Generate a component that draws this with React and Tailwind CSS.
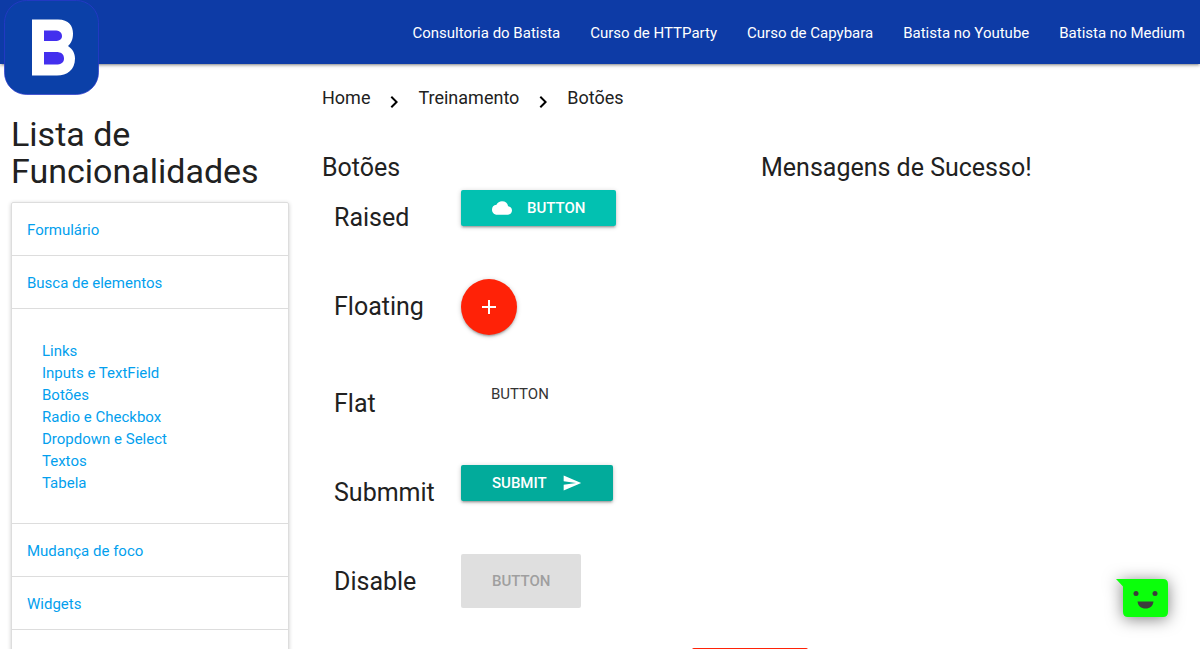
import React from "react";
import { MdAdd, MdChevronRight, MdCloud, MdSend } from "react-icons/md";

const navLinks = [
  "Consultoria do Batista",
  "Curso de HTTParty",
  "Curso de Capybara",
  "Batista no Youtube",
  "Batista no Medium",
];

const searchLinks = [
  "Links",
  "Inputs e TextField",
  "Botões",
  "Radio e Checkbox",
  "Dropdown e Select",
  "Textos",
  "Tabela",
];

const crumbs = ["Home", "Treinamento", "Botões"];

const raised =
  "flex h-9 items-center gap-[15px] rounded-xs px-[31px] text-[15px] font-medium text-white shadow-[0_2px_2px_0_rgba(0,0,0,0.14),0_3px_1px_-2px_rgba(0,0,0,0.12),0_1px_5px_0_rgba(0,0,0,0.2)]";

function Logo() {
  return (
    <svg viewBox="0 0 95 95" className="size-[95px]" role="img" aria-label="Batista">
      <rect x="0.5" y="0.5" width="94" height="94" rx="22" fill="#0b40a8" stroke="#2c38cf" strokeWidth="0.7" />
      <path
        fill="#fff"
        d="M28 19.5H54C65 19.5 69 26 69 33.5C69 39.5 67 43.5 64 46C68.500 49 71 53 71 58.500C71 70 63 75.500 53 75.500H28Z"
      />
      <path
        fill="#432fee"
        d="M40 30.500H50.500C55.500 30.500 58 32.500 58 36C58 39.500 55.500 41 51 41H40ZM40 52H52C57 52 60 54 60 58.500C60 62.500 57 64.500 52 64.500H40Z"
      />
    </svg>
  );
}

function Row({ label, children }) {
  return (
    <div className="mb-[34px] flex items-start">
      <h5 className="w-1/3 shrink-0 py-[14px] pl-3 text-[25px] leading-[27px]">{label}</h5>
      {children}
    </div>
  );
}

function SideItem({ children }) {
  return (
    <li className="border-b border-[#dddddd] px-[15px] pt-4 pb-3.5">
      <a href="#" className="block">{children}</a>
    </li>
  );
}

export default function App() {
  return (
    <div className="relative h-screen overflow-hidden bg-white font-['Roboto',sans-serif] text-[15px] leading-[22px] text-[#212121]">
      <header className="relative flex h-16 items-center justify-end bg-[#0d3ba6] shadow-[0_2px_2px_0_rgba(0,0,0,0.14),0_3px_1px_-2px_rgba(0,0,0,0.12),0_1px_5px_0_rgba(0,0,0,0.2)]">
        <a href="#" className="absolute top-0 left-1">
          <Logo />
        </a>
        <nav className="flex gap-[30px] pt-0.5 pr-[15px] text-white">
          {navLinks.map((t) => (
            <a key={t} href="#">{t}</a>
          ))}
        </nav>
      </header>

      <div className="flex">
        <aside className="w-1/4 shrink-0 px-[11px] pt-[52px]">
          <h4 className="text-[34px] leading-[37px]">Lista de Funcionalidades</h4>
          <ul className="mt-3 rounded-xs border border-[#dddddd] text-[#039fee] shadow-[0_1px_4px_0_rgba(0,0,0,0.2)]">
            <SideItem>Formulário</SideItem>
            <SideItem>Busca de elementos</SideItem>
            <li className="border-b border-[#dddddd] px-[30px] pt-[31px] pb-[29px]">
              <ul>
                {searchLinks.map((t) => (
                  <li key={t}>
                    <a href="#">{t}</a>
                  </li>
                ))}
              </ul>
            </li>
            <SideItem>Mudança de foco</SideItem>
            <SideItem>Widgets</SideItem>
            <li className="h-14" />
          </ul>
        </aside>

        <main className="flex-1">
          <nav className="flex items-center gap-3 px-[22px] pt-[18px] text-[18px] leading-8">
            {crumbs.map((t, i) => (
              <React.Fragment key={t}>
                {i > 0 && <MdChevronRight className="mt-2 size-6 text-black" />}
                <a href="#">{t}</a>
              </React.Fragment>
            ))}
          </nav>

          <div className="mt-10 grid grid-cols-2 px-[11px]">
            <section className="px-[11px]">
              <h5 className="mb-[9px] text-[25px] leading-[27px]">Botões</h5>
              <Row label="Raised">
                <button type="button" className={raised + " bg-[#02c1b1]"}>
                  <MdCloud className="size-5" />
                  BUTTON
                </button>
              </Row>
              <Row label="Floating">
                <button
                  type="button"
                  aria-label="Adicionar"
                  className="mb-[7px] flex size-14 items-center justify-center rounded-full bg-[#ff2207] text-white shadow-[0_2px_2px_0_rgba(0,0,0,0.14),0_3px_1px_-2px_rgba(0,0,0,0.12),0_1px_5px_0_rgba(0,0,0,0.2)]"
                >
                  <MdAdd className="size-6" />
                </button>
              </Row>
              <Row label="Flat">
                <button type="button" className="h-9 px-[30px] text-[15px] text-[#343434]">
                  BUTTON
                </button>
              </Row>
              <Row label="Submmit">
                <button type="submit" className={raised + " bg-[#02ab9b]"}>
                  SUBMIT
                  <MdSend className="size-5" />
                </button>
              </Row>
              <Row label="Disable">
                <button
                  type="button"
                  disabled
                  className="h-[54px] rounded-xs bg-[#dfdfdf] px-[31px] text-[15px] font-medium text-[#9f9f9f]"
                >
                  BUTTON
                </button>
              </Row>
            </section>
            <section className="px-[11px]">
              <h5 className="text-[25px] leading-[27px]">Mensagens de Sucesso!</h5>
            </section>
          </div>

          <div className="mt-[5px] flex justify-center">
            <div className="h-9 w-[116px] rounded-xs bg-[#ff2207]" />
          </div>
        </main>
      </div>

      <button type="button" aria-label="Chat" className="absolute right-8 bottom-8">
        <svg
          viewBox="0 0 52 38"
          className="h-[38px] w-[52px] drop-shadow-[0_2px_8px_rgba(0,0,0,0.5)]"
        >
          <path
            fill="#0bff0b"
            d="M0 0H47Q52 0 52 5V33Q52 38 47 38H12Q7 38 7 33V7.500Z"
          />
          <circle cx="20" cy="14.500" r="2.500" fill="#3c3c3c" />
          <circle cx="39" cy="14.500" r="2.500" fill="#3c3c3c" />
          <path fill="#3c3c3c" d="M21.500 22.500H37.500C37 27 34 29.500 29.500 29.500C25 29.500 22 27 21.500 22.500Z" />
        </svg>
      </button>
    </div>
  );
}
